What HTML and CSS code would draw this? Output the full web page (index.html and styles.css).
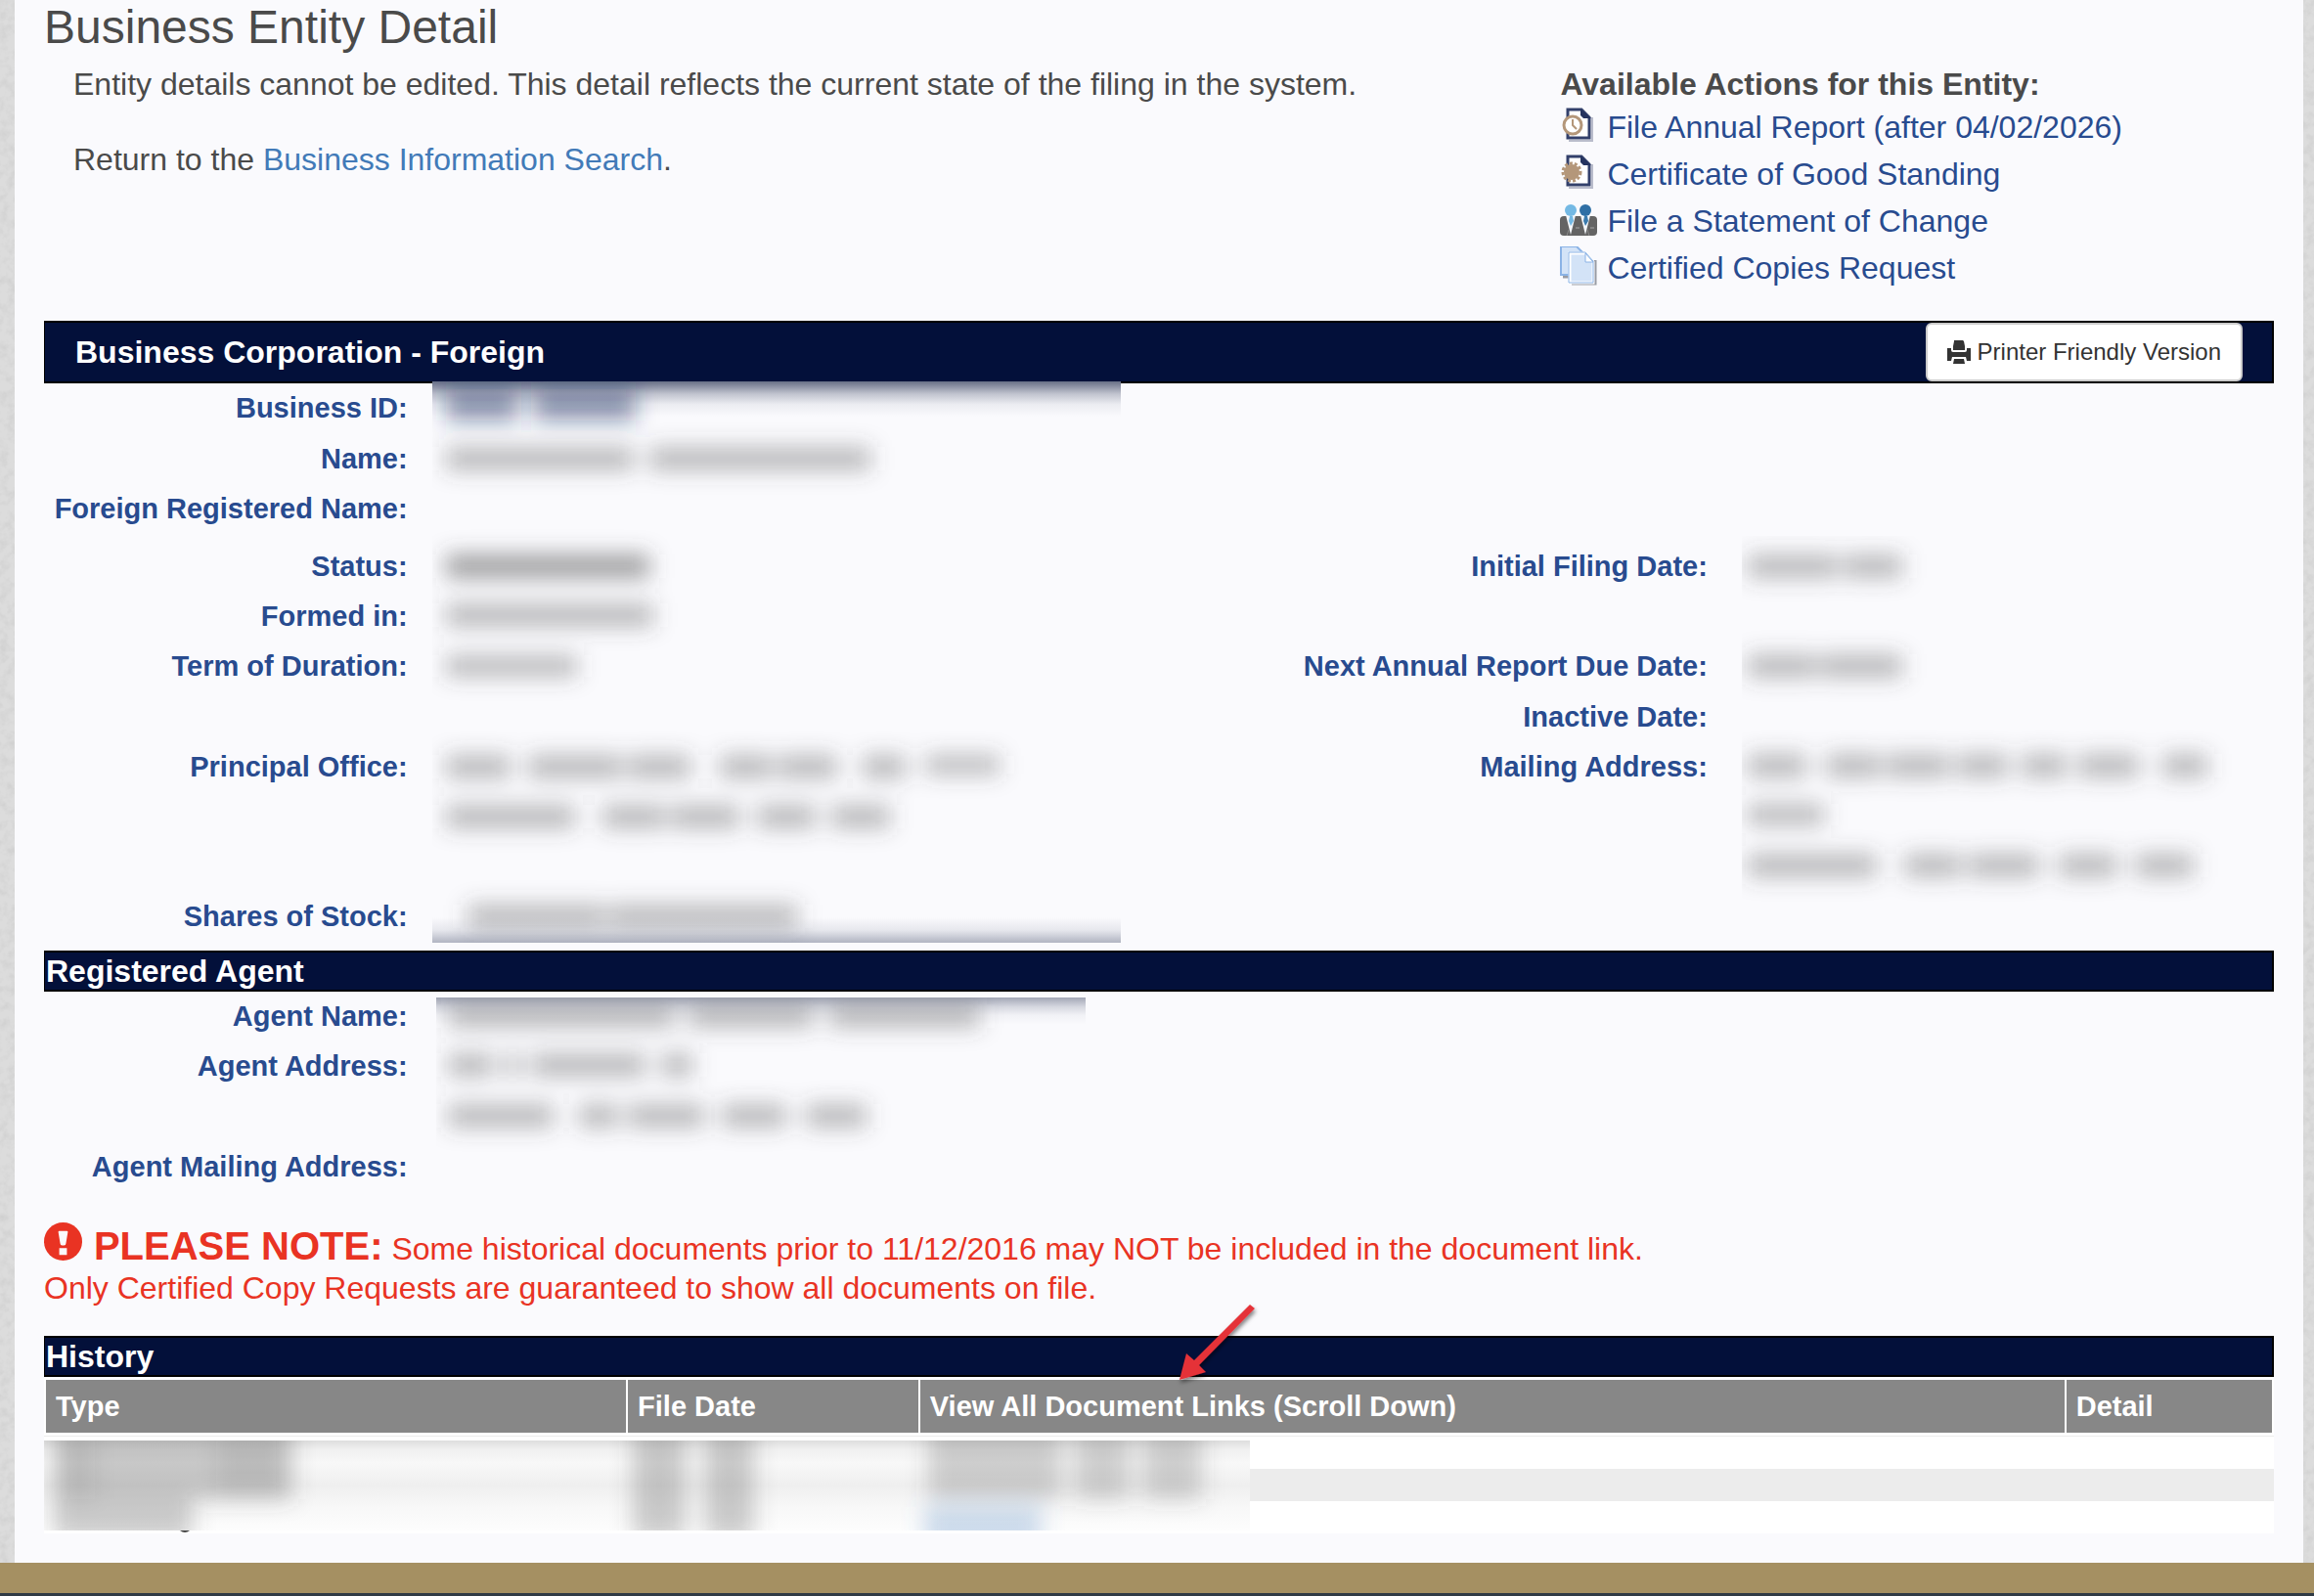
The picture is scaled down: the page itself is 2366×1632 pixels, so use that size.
FILE: index.html
```html
<!DOCTYPE html>
<html lang="en">
<head>
    <meta charset="UTF-8" />
    <meta name="viewport" content="width=device-width, initial-scale=1.0" />
    <title>Business Entity Detail</title>
    <link rel="stylesheet" href="styles.css">
</head>
<body>
    <!-- Paper grain for the page background -->
    <svg class="grain" aria-hidden="true">
        <filter id="grain">
            <feTurbulence type="fractalNoise" baseFrequency="0.12" numOctaves="3" />
            <feColorMatrix type="matrix" values="0 0 0 0 0.5  0 0 0 0 0.5  0 0 0 0 0.5  0.7 0 0 0 -0.28" />
        </filter>
        <rect width="100%" height="100%" filter="url(#grain)" />
    </svg>

    <main class="page">
        <h1>Business Entity Detail</h1>
        <div class="intro">
            <div class="intro-text">
                <p>Entity details cannot be edited. This detail reflects the current state of the filing in the system.</p>
                <p>Return to the <a href="#search">Business Information Search</a>.</p>
            </div>
            <div class="actions">
                <h2>Available Actions for this Entity:</h2>
                <ul>
                    <li>
                        <svg viewBox="0 0 38 40" aria-hidden="true">
                            <path d="M9 36h24V12" fill="none" stroke="#b9bccb" stroke-width="2" />
                            <path d="M8 4h14l8 8v21H8z" fill="#fff" stroke="#33406b" stroke-width="3" />
                            <path d="M21 3l11 10h-8l-3-3z" fill="#26345f" />
                            <circle cx="13" cy="20" r="9" fill="#fff" stroke="#b4977a" stroke-width="3" />
                            <path d="M13 14v6l4 4" fill="none" stroke="#b4977a" stroke-width="2" />
                        </svg>
                        <a href="#annual">File Annual Report (after 04/02/2026)</a>
                    </li>
                    <li>
                        <svg viewBox="0 0 38 40" aria-hidden="true">
                            <path d="M9 36h24V12" fill="none" stroke="#b9bccb" stroke-width="2" />
                            <path d="M8 4h14l8 8v21H8z" fill="#fff" stroke="#33406b" stroke-width="3" />
                            <path d="M21 3l11 10h-8l-3-3z" fill="#26345f" />
                            <circle cx="12" cy="20" r="8" fill="#b4977a" />
                            <circle cx="12" cy="20" r="9" fill="none" stroke="#b4977a" stroke-width="3" stroke-dasharray="3 2" />
                        </svg>
                        <a href="#standing">Certificate of Good Standing</a>
                    </li>
                    <li>
                        <svg viewBox="0 0 38 40" aria-hidden="true">
                            <path d="M0 21q0-4 4-4h30q4 0 4 4v12q0 4-4 4H4q-4 0-4-4z" fill="#646464" />
                            <path d="M6 16h10l-5 20zM21 16h10l-5 20z" fill="#f4f7fb" />
                            <path d="M10 17h3l1 5-3 5-2-5z" fill="#74b9e4" />
                            <path d="M25 17h3l1 5-3 5-2-5z" fill="#3a7bae" />
                            <circle cx="11" cy="11" r="6" fill="#74b9e4" />
                            <circle cx="26" cy="11" r="6" fill="#2f6fa5" />
                            <path d="M16 29h4M31 29h4" stroke="#a5a5a5" stroke-width="1" />
                            <path d="M7 37l2-6M30 37l-2-6" stroke="#8a8a8a" stroke-width="1" />
                        </svg>
                        <a href="#change">File a Statement of Change</a>
                    </li>
                    <li>
                        <svg viewBox="0 0 38 40" aria-hidden="true">
                            <path d="M12 38h24V14" fill="none" stroke="#989ba3" stroke-width="3" />
                            <path d="M3 31h6" stroke="#989ba3" stroke-width="3" />
                            <path d="M1 0h16l6 6v23H1z" fill="#d3e3f7" stroke="#8bb3e6" stroke-width="2" />
                            <path d="M10 7h17l7 9v21H10z" fill="#d3e3f7" stroke="#fff" stroke-width="3" />
                            <path d="M9 6h17l8 9v22H9z" fill="none" stroke="#8bb3e6" stroke-width="1" />
                            <path d="M26 7v9h8z" fill="#fff" stroke="#8bb3e6" stroke-width="1" />
                        </svg>
                        <a href="#copies">Certified Copies Request</a>
                    </li>
                </ul>
            </div>
        </div>

        <div class="bar bar-main">
            <h2>Business Corporation - Foreign</h2>
            <button type="button" class="print-btn">
                <svg viewBox="0 0 24 24" aria-hidden="true">
                    <path d="M7 0h9l1 1 1 5v4H6V6l1-5zM0 8h4v2q0 2 2 2h12q2 0 2-2V8h4v13h-4l-1-4H5l-1 4H0zM7 19h10l1 5H6z" fill="#333" />
                </svg>
                Printer Friendly Version
            </button>
        </div>

        <dl class="details">
            <dt class="r1">Business ID:</dt>
            <dt class="r2">Name:</dt>
            <dt class="r3">Foreign Registered Name:</dt>
            <dt class="r4">Status:</dt>
            <dt class="r5">Formed in:</dt>
            <dt class="r6">Term of Duration:</dt>
            <dt class="r8">Principal Office:</dt>
            <dt class="r11">Shares of Stock:</dt>
            <dt class="r4 right">Initial Filing Date:</dt>
            <dt class="r6 right">Next Annual Report Due Date:</dt>
            <dt class="r7 right">Inactive Date:</dt>
            <dt class="r8 right">Mailing Address:</dt>

            <!-- Redacted values -->
            <dd class="redacted redacted-entity">
                <svg width="704" height="574" viewBox="0 0 704 574" role="img" aria-label="Redacted">
                    <defs>
                        <filter id="smudge" x="-60" y="-60" width="1400" height="700" filterUnits="userSpaceOnUse">
                            <feGaussianBlur stdDeviation="11" />
                        </filter>
                        <linearGradient id="fade-top" x1="0" y1="0" x2="0" y2="1">
                            <stop offset="0" stop-color="#061238" stop-opacity=".6" />
                            <stop offset=".35" stop-color="#061238" stop-opacity=".24" />
                            <stop offset=".65" stop-color="#061238" stop-opacity=".06" />
                            <stop offset="1" stop-color="#061238" stop-opacity="0" />
                        </linearGradient>
                        <linearGradient id="fade-bottom" x1="0" y1="1" x2="0" y2="0">
                            <stop offset="0" stop-color="#061238" stop-opacity=".3" />
                            <stop offset=".5" stop-color="#061238" stop-opacity=".08" />
                            <stop offset="1" stop-color="#061238" stop-opacity="0" />
                        </linearGradient>
                    </defs>
                    <rect width="704" height="574" fill="#fafafd" />
                    <rect width="704" height="36" fill="url(#fade-top)" />
                    <g filter="url(#smudge)" fill="#4a4a4a" fill-opacity=".36">
                        <path d="M14 8h74v32H14zM104 8h104v32H104z" fill="#1c2c60" fill-opacity=".48" />
                        <path d="M14 67h192v24H14zM222 67h226v24H222z" />
                        <path d="M14 177h208v24H14z" fill-opacity=".52" />
                        <path d="M14 227h212v24H14zM14 280h134v22H14z" />
                        <path d="M14 382h66v24H14zM98 382h96v24H98zM200 382h64v24h-64zM294 382h54v24h-54zM354 382h60v24h-60zM440 382h44v24h-44zM504 382h76v20h-76z" />
                        <path d="M14 433h132v24H14zM174 433h64v24h-64zM244 433h70v24h-70zM332 433h60v24h-60zM408 433h60v24h-60z" />
                        <path d="M36 535h140v24H36zM180 535h194v24H180z" />
                    </g>
                    <rect y="548" width="704" height="26" fill="url(#fade-bottom)" />
                </svg>
            </dd>
            <dd class="redacted redacted-dates">
                <svg width="510" height="374" viewBox="0 0 510 374" role="img" aria-label="Redacted">
                    <g filter="url(#smudge)" fill="#4a4a4a" fill-opacity=".36">
                        <path d="M6 19h92v24H6zM104 19h60v24h-60zM6 121h70v24H6zM80 121h84v24H80z" />
                        <path d="M6 223h60v24H6zM86 223h56v24H86zM148 223h64v24h-64zM220 223h52v24h-52zM286 223h46v24h-46zM344 223h62v24h-62zM430 223h46v24h-46z" />
                        <path d="M6 274h78v22H6z" />
                        <path d="M6 325h132v24H6zM166 325h58v24h-58zM232 325h72v24h-72zM324 325h60v24h-60zM402 325h60v24h-60z" />
                    </g>
                </svg>
            </dd>
        </dl>

        <div class="bar"><h2>Registered Agent</h2></div>
        <dl class="details agent">
            <dt class="r1">Agent Name:</dt>
            <dt class="r2">Agent Address:</dt>
            <dt class="r4">Agent Mailing Address:</dt>
            <dd class="redacted redacted-agent">
                <svg width="664" height="160" viewBox="0 0 664 160" role="img" aria-label="Redacted">
                    <rect width="664" height="160" fill="#fafafd" />
                    <rect width="664" height="28" fill="url(#fade-top)" fill-opacity=".6" />
                    <g filter="url(#smudge)" fill="#4a4a4a" fill-opacity=".36">
                        <path d="M12 7h232v24H12zM258 7h128v24H258zM402 7h154v24H402z" />
                        <path d="M12 57h46v24H12zM70 57h16v24H70zM98 57h116v24H98zM230 57h32v24h-32z" />
                        <path d="M12 109h108v24H12zM146 109h40v24h-40zM196 109h78v24h-78zM292 109h66v24h-66zM378 109h62v24h-62z" />
                    </g>
                </svg>
            </dd>
        </dl>

        <p class="note">
            <svg viewBox="0 0 40 40" aria-hidden="true">
                <circle cx="20" cy="20" r="20" fill="#e93323" />
                <path d="M15 10q0-1 1-1h8q1 0 1 1l-2 12q0 2-2 2h-2q-2 0-2-2zM16 27h8v7h-8z" fill="#fafafd" />
            </svg>
            <strong>PLEASE NOTE:</strong> Some historical documents prior to 11/12/2016 may NOT be included in the document link.<br>
            Only Certified Copy Requests are guaranteed to show all documents on file.
        </p>

        <section class="history">
            <div class="bar"><h2>History</h2></div>
            <table>
                <thead>
                    <tr>
                        <th class="col-type">Type</th>
                        <th class="col-date">File Date</th>
                        <th>View All Document Links (Scroll Down)</th>
                        <th class="col-detail">Detail</th>
                    </tr>
                </thead>
                <tbody>
                    <tr><td></td><td></td><td></td><td></td></tr>
                    <tr><td></td><td></td><td></td><td></td></tr>
                    <tr><td></td><td></td><td></td><td></td></tr>
                </tbody>
            </table>
            <svg class="history-redacted" width="1233" height="95" viewBox="0 0 1233 95" role="img" aria-label="Redacted">
                <defs>
                    <linearGradient id="rows" x1="0" y1="0" x2="0" y2="1">
                        <stop offset="0" stop-color="#dedede" />
                        <stop offset=".1" stop-color="#f0f0f0" />
                        <stop offset=".25" stop-color="#f8f8f8" />
                        <stop offset=".5" stop-color="#efefef" />
                        <stop offset=".75" stop-color="#f8f8f8" />
                        <stop offset="1" stop-color="#fdfdfd" />
                    </linearGradient>
                    <clipPath id="rows-clip"><rect width="1233" height="92" /></clipPath>
                </defs>
                <rect width="1233" height="92" fill="url(#rows)" />
                <g clip-path="url(#rows-clip)">
                    <g filter="url(#smudge)" fill="#4a4a4a" fill-opacity=".28">
                        <path d="M10 -20h244v80H10zM10 60h142v40H10z" />
                        <path d="M18 -10h34v70H18zM176 -10h70v66h-70z" fill-opacity=".1" />
                        <path d="M602 -20h54v120h-54zM676 -20h50v120h-50z" fill-opacity=".28" />
                        <path d="M904 -20h136v80H904zM1054 -20h56v80h-56zM1124 -20h60v80h-60z" fill-opacity=".24" />
                        <path d="M900 68h120v40H900z" fill="#4a80c0" />
                    </g>
                </g>
                <path d="M139 92h10q-5 4-10 0z" fill="#444" />
            </svg>
            <svg class="arrow" width="90" height="90" viewBox="0 0 90 90" aria-hidden="true">
                <defs>
                    <filter id="arrow-shadow">
                        <feDropShadow dx="1" dy="3" stdDeviation="2" flood-opacity=".5" />
                    </filter>
                </defs>
                <path d="M79 6l5 4-57 58 7 7-27 8 7-27 8 7z" fill="#e53238" filter="url(#arrow-shadow)" />
            </svg>
        </section>
    </main>
    <footer></footer>
</body>
</html>
```
FILE: styles.css
```css
* {
    box-sizing: border-box;
}
body {
    margin: 0;
    min-height: 100vh;
    display: flex;
    flex-direction: column;
    background-color: #dcdcdc;
    color: #4a4a4a;
    font-family: Arial, "Liberation Sans", sans-serif;
    font-size: 32px;
    line-height: 39px;
}
.grain {
    position: absolute;
    width: 100%;
    height: 100%;
    z-index: -1;
}
h1, h2, p, ul, dl, dd {
    margin: 0;
    padding: 0;
}
h1 {
    font-size: 48px;
    font-weight: normal;
    line-height: 52px;
}
h2 {
    font-size: 32px;
}
a {
    color: #427ab8;
    text-decoration: none;
}
a:hover {
    text-decoration: underline;
}
.page {
    margin: 0 11px 0 15px;
    padding: 2px 30px 30px;
    background-color: #fafafd;
}
.intro {
    display: grid;
    grid-template-columns: 68% 32%;
    margin: 13px 0 30px;
}
.intro-text {
    padding-left: 30px;
}
.intro-text p {
    margin-bottom: 38px;
}
.actions ul {
    list-style: none;
}
.actions li {
    display: flex;
    gap: 10px;
    line-height: 48px;
}
.actions svg {
    width: 38px;
    height: 40px;
    margin-top: 2px;
}
.actions a {
    color: #284b8f;
}

/* Dark section bars */
.bar {
    background-color: #03103a;
    border: 2px solid #000;
    border-left-width: 1px;
    color: #fff;
    line-height: 38px;
}
.bar h2 {
    padding-left: 1px;
}
.bar-main {
    display: flex;
    justify-content: space-between;
    align-items: center;
    padding: 0 30px;
}
.print-btn {
    display: flex;
    align-items: center;
    gap: 7px;
    padding: 10px 20px;
    background-color: #fff;
    border: 2px solid #ccc;
    border-radius: 6px;
    color: #333;
    font-family: inherit;
    font-size: 24px;
    line-height: 36px;
    cursor: pointer;
}
.print-btn:hover {
    background-color: #e6e6e6;
}
.print-btn svg {
    width: 24px;
    height: 24px;
}

/* Label / value grid */
.details {
    display: grid;
    grid-template-columns: 16.3% 38.3% 20% 25.4%;
    grid-template-rows: 52px 51px 59px 51px 51px 52px 51px 51px 51px 51px 51px;
    margin-bottom: 9px;
}
.agent {
    grid-template-rows: 51px 51px 52px 51px;
    margin-bottom: 31px;
}
.details dt {
    grid-column: 1;
    color: #284b8f;
    font-size: 29px;
    font-weight: bold;
    line-height: 51px;
    text-align: right;
    white-space: nowrap;
}
.details .right {
    grid-column: 3;
}
.r1 { grid-row: 1; }
.r2 { grid-row: 2; }
.r3 { grid-row: 3; }
.r4 { grid-row: 4; }
.r5 { grid-row: 5; }
.r6 { grid-row: 6; }
.r7 { grid-row: 7; }
.r8 { grid-row: 8; }
.r11 { grid-row: 11; }
.redacted svg {
    display: block;
}
.redacted-entity {
    grid-column: 2;
    grid-row: 1 / -1;
    margin: -2px 0 0 25px;
}
.redacted-dates {
    grid-column: 4;
    grid-row: 4 / -1;
    margin: -6px 0 0 35px;
}
.redacted-agent {
    grid-column: 2;
    grid-row: 1 / -1;
    margin: 6px 0 0 29px;
}

.note {
    margin-bottom: 29px;
    color: #e93323;
    line-height: 40px;
}
.note svg {
    width: 39px;
    height: 39px;
    margin-right: 3px;
    vertical-align: -1px;
}
.note strong {
    font-size: 40px;
}

/* History table */
.history {
    position: relative;
}
table {
    width: 100%;
    border-collapse: separate;
    border-spacing: 0;
    table-layout: fixed;
    background-color: #fff;
}
th {
    padding: 9px 10px;
    background-color: #878787;
    background-clip: padding-box;
    border: solid #fff;
    border-width: 3px 0 3px 2px;
    color: #fff;
    font-size: 29px;
    line-height: 36px;
    text-align: left;
}
th:last-child {
    border-right-width: 2px;
}
.col-type {
    width: 26.1%;
}
.col-date {
    width: 13.1%;
}
.col-detail {
    width: 9.4%;
}
td {
    height: 33px;
    padding: 0;
}
tbody tr:first-child td {
    height: 34px;
    border-top: 1px solid #ececec;
}
tbody tr:nth-child(even) {
    background-color: #ececec;
}
.history-redacted {
    position: absolute;
    left: 0;
    bottom: 0;
}
.arrow {
    position: absolute;
    left: 1154px;
    top: -38px;
    overflow: visible;
}
footer {
    flex: 1;
    background-color: #a59062;
    border-bottom: 3px solid #303a45;
}
```
